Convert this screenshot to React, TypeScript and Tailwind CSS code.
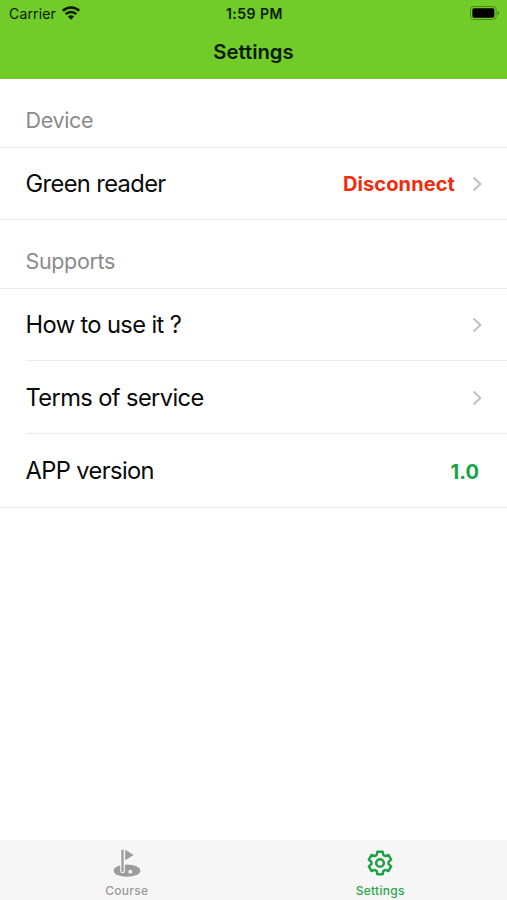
import type { ReactNode } from "react";
import clsx from "clsx";

type Row = {
  label: string;
  value?: string;
  valueClass?: string;
  hasLink?: boolean;
};

const supportRows: Row[] = [
  { label: "How to use it ?", hasLink: true },
  { label: "Terms of service", hasLink: true },
  { label: "APP version", value: "1.0", valueClass: "text-[#12a53f] mr-[3px]" },
];

const WifiIcon = () => (
  <svg width="18" height="14" viewBox="0 0 54 42" fill="none" stroke="#0b1a03">
    <path d="M2.500 14.500C16 1 38 1 51.500 14.500" strokeWidth="8" />
    <path d="M11 24.500C20 15.500 34 15.500 43 24.500" strokeWidth="7.500" />
    <path d="M27 41L17.500 31.500C23 26.500 31 26.500 36.500 31.500Z" fill="#0b1a03" stroke="none" />
  </svg>
);

const BatteryIcon = () => (
  <svg width="30" height="14" viewBox="0 0 90 42">
    <rect x="1.500" y="1.500" width="77" height="39" rx="10" fill="none" stroke="#48871a" strokeWidth="3" />
    <rect x="7" y="7" width="66" height="28" rx="5" fill="#000" />
    <path d="M83 14C89 17 89 25 83 28Z" fill="#48871a" />
  </svg>
);

const Chevron = () => (
  <svg width="10" height="16" viewBox="0 0 10 16" fill="none" stroke="#c3c3c5" strokeWidth="2.200">
    <path d="M1.500 1.500L8.300 8L1.500 14.500" />
  </svg>
);

const CourseIcon = () => (
  <svg width="28" height="28" viewBox="0 0 84 84">
    <ellipse cx="42" cy="65" rx="40" ry="18.500" fill="#9c9c9c" />
    <path d="M21.500 66V2H35.500V66A7 7 0 0 1 21.500 66Z" fill="#f6f6f6" />
    <path d="M25 66V2H32V66A3.500 3.500 0 0 1 25 66Z" fill="#9c9c9c" />
    <path d="M36.500 2L62 18L36.500 34Z" fill="#9c9c9c" />
    <ellipse cx="52" cy="68" rx="6" ry="5.500" fill="#f6f6f6" />
  </svg>
);

const GearIcon = () => (
  <svg
    width="28"
    height="28"
    viewBox="-42 -42 84 84"
    fill="none"
    stroke="#1da243"
    strokeWidth="7.500"
    strokeLinejoin="round"
  >
    <path d="M-10 -24L-8 -34H8L10 -24L15.800 -20.700L25.400 -23.900L33.400 -10.100L25.800 -3.300V3.300L33.400 10.100L25.400 23.900L15.800 20.700L10 24L8 34H-8L-10 24L-15.800 20.700L-25.400 23.900L-33.400 10.100L-25.800 3.300V-3.300L-33.400 -10.100L-25.400 -23.900L-15.800 -20.700Z" />
    <circle r="11.500" />
  </svg>
);

const SectionTitle = ({ children }: { children: ReactNode }) => (
  <h2 className="flex h-full items-center pl-[25.500px] pt-[14px] text-[21.500px] tracking-[-0.350px] text-[#8b8b8b]">
    {children}
  </h2>
);

const SettingsRow = ({ label, value, valueClass, hasLink }: Row) => (
  <div className="flex h-full items-center pr-[25px]">
    <span className="-ml-[0.500px] text-[23.700px] tracking-[-0.620px] text-[#0a0a0a]">{label}</span>
    <div className="ml-auto flex items-center gap-[17px]">
      {value && <span className={clsx("pt-px text-[20px] font-bold tracking-[0.100px]", valueClass)}>{value}</span>}
      {hasLink && <Chevron />}
    </div>
  </div>
);

const Tab = ({ label, active, children }: { label: string; active?: boolean; children: ReactNode }) => (
  <div className="flex flex-1 flex-col items-center pt-[9px]">
    {children}
    <span
      className={clsx(
        "mt-[6px] text-[12px] leading-[15px] font-medium tracking-[0.300px]",
        active ? "text-[#2da44e]" : "text-[#9a9a9a]"
      )}
    >
      {label}
    </span>
  </div>
);

const App = () => {
  return (
    <div className="flex h-[900px] w-[507px] flex-col bg-white font-['Inter',sans-serif]">
      <header className="h-[79px] shrink-0 bg-[#71cb29] text-[#0b1a03]">
        <div className="grid h-[26px] grid-cols-3 items-center pl-[9px] pr-[7px]">
          <div className="flex items-center gap-[6px] text-[14px] tracking-[0.150px]">
            <span>Carrier</span>
            <WifiIcon />
          </div>
          <span className="text-center text-[14px] font-semibold tracking-[0.500px]">1:59 PM</span>
          <div className="flex justify-end">
            <BatteryIcon />
          </div>
        </div>
        <h1 className="pt-[11px] text-center text-[20.300px] leading-[30px] font-semibold">Settings</h1>
      </header>

      <main className="flex-1">
        <section>
          <div className="h-[69px] border-b border-[#e9e9e9]">
            <SectionTitle>Device</SectionTitle>
          </div>
          <div className="h-[72px] border-b border-[#e9e9e9] pl-[26px]">
            <SettingsRow label="Green reader" value="Disconnect" valueClass="text-[#f32a0b]" hasLink />
          </div>
        </section>
        <section className="border-b border-[#ececec]">
          <div className="h-[69px] border-b border-[#ececec]">
            <SectionTitle>Supports</SectionTitle>
          </div>
          <div className="ml-[26px] divide-y divide-[#ececec]">
            {supportRows.map((row) => (
              <div key={row.label} className="h-[73px] pt-px first:h-[72px] first:pt-0">
                <SettingsRow {...row} />
              </div>
            ))}
          </div>
        </section>
      </main>

      <nav className="flex h-[60px] shrink-0 bg-[#f6f6f6]">
        <Tab label="Course">
          <CourseIcon />
        </Tab>
        <Tab label="Settings" active>
          <GearIcon />
        </Tab>
      </nav>
    </div>
  );
};

export default App;
